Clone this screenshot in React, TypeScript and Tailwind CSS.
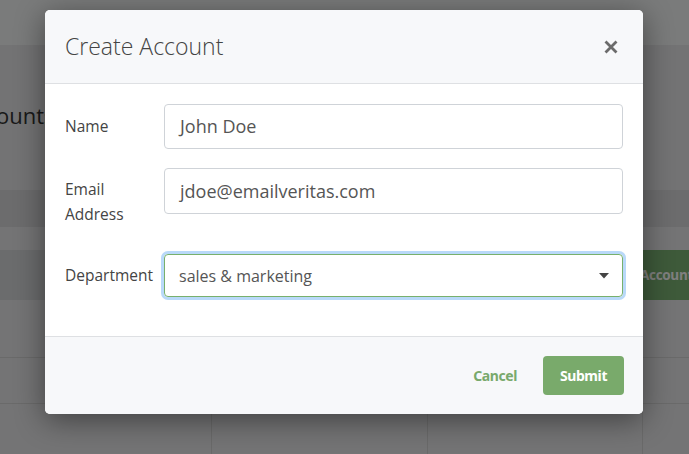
import React from "react";

export default function App() {
  return (
    <div className="relative h-[454px] w-[689px] overflow-hidden bg-[#e6e7e9] font-['Open_Sans',sans-serif]">
      {/* underlying page */}
      <div className="h-[45px] bg-[#f5f6f6]" />
      <div className="h-[145px] pt-[55px]">
        <div className="ml-[-39px] text-[22px] leading-[30px] text-[#333]">Accounts</div>
      </div>
      <div className="flex h-[37px] bg-[#d8d9db]" />
      <div className="h-[23px] bg-[#e8e9eb]" />
      <div className="flex h-[50px] justify-end bg-[#d7d8da]">
        <div className="flex w-[120px] items-center whitespace-nowrap bg-[#7cb474] pl-[71px] text-[13.5px] font-bold tracking-[-0.3px] text-white">
          Account
        </div>
      </div>
      <div className="grid h-[58px] grid-cols-[212px_216px_215px_1fr] border-b border-[#d4d4d4] bg-[#e8e9eb]">
        <div className="border-r border-[#d4d4d4]" />
        <div className="border-r border-[#d4d4d4]" />
        <div className="border-r border-[#d4d4d4]" />
        <div />
      </div>
      <div className="grid h-[46px] grid-cols-[212px_216px_215px_1fr] border-b border-[#d4d4d4] bg-[#e8e9eb]">
        <div className="border-r border-[#d4d4d4]" />
        <div className="border-r border-[#d4d4d4]" />
        <div className="border-r border-[#d4d4d4]" />
        <div />
      </div>
      <div className="grid h-[60px] grid-cols-[212px_216px_215px_1fr] bg-[#e8e9eb]">
        <div className="border-r border-[#d4d4d4]" />
        <div className="border-r border-[#d4d4d4]" />
        <div className="border-r border-[#d4d4d4]" />
        <div />
      </div>

      {/* backdrop */}
      <div className="absolute inset-0 bg-black/50" />

      {/* modal */}
      <div className="absolute left-[45px] top-[10px] w-[598px] overflow-hidden rounded-[5px] bg-white shadow-[0_6px_30px_rgba(0,0,0,0.45)]">
        <div className="flex h-[74px] items-center justify-between border-b border-[#dee0e3] bg-[#f7f8fa] px-5">
          <h2 className="text-[23px] font-light text-[#444]">Create Account</h2>
          <button className="mr-[4px] text-[#666]">
            <svg width="16" height="16" viewBox="0 0 16 16">
              <path d="M2.5 2.5 L13.5 13.5 M13.5 2.5 L2.5 13.5" stroke="#6b6b6b" strokeWidth="2.8" strokeLinecap="butt" />
            </svg>
          </button>
        </div>

        <div className="px-5 pt-5 pb-[39px]">
          <div className="flex items-center">
            <label className="w-[99px] shrink-0 text-[15.5px] text-[#444]">Name</label>
            <div className="flex h-[45px] flex-1 items-center rounded-[4px] border border-[#cfd3d8] px-[15px] text-[18px] text-[#555]">
              John Doe
            </div>
          </div>
          <div className="mt-[19px] flex items-start">
            <label className="w-[99px] shrink-0 pt-[9px] text-[15.5px] leading-[25px] text-[#444]">
              Email
              <br />
              Address
            </label>
            <div className="flex h-[46px] flex-1 items-center rounded-[4px] border border-[#cfd3d8] px-[15px] text-[18px] text-[#555]">
              jdoe@emailveritas.com
            </div>
          </div>
          <div className="mt-[27px] flex items-center">
            <label className="w-[99px] shrink-0 text-[15.5px] text-[#444]">Department</label>
            <div className="flex h-[43px] flex-1 items-center justify-between rounded-[4px] border border-[#78b06c] px-[14px] text-[16px] text-[#555] shadow-[0_0_0_3px_#b9d9f9]">
              <span>sales &amp; marketing</span>
              <svg width="10" height="6" viewBox="0 0 10 6" className="mr-[-1px]">
                <path d="M0 0 L10 0 L5 5.5 Z" fill="#444" />
              </svg>
            </div>
          </div>
        </div>

        <div className="flex h-[78px] items-center justify-end gap-[14px] border-t border-[#dee0e3] bg-[#f7f8fa] px-5 pr-[19px]">
          <button className="px-3 font-['Noto_Sans',sans-serif] text-[14px] font-bold tracking-[-0.4px] text-[#79a96c]">
            Cancel
          </button>
          <button className="h-[39px] w-[81px] rounded-[4px] bg-[#79aa6b] font-['Noto_Sans',sans-serif] text-[14px] font-bold tracking-[-0.4px] text-white">
            Submit
          </button>
        </div>
      </div>
    </div>
  );
}
